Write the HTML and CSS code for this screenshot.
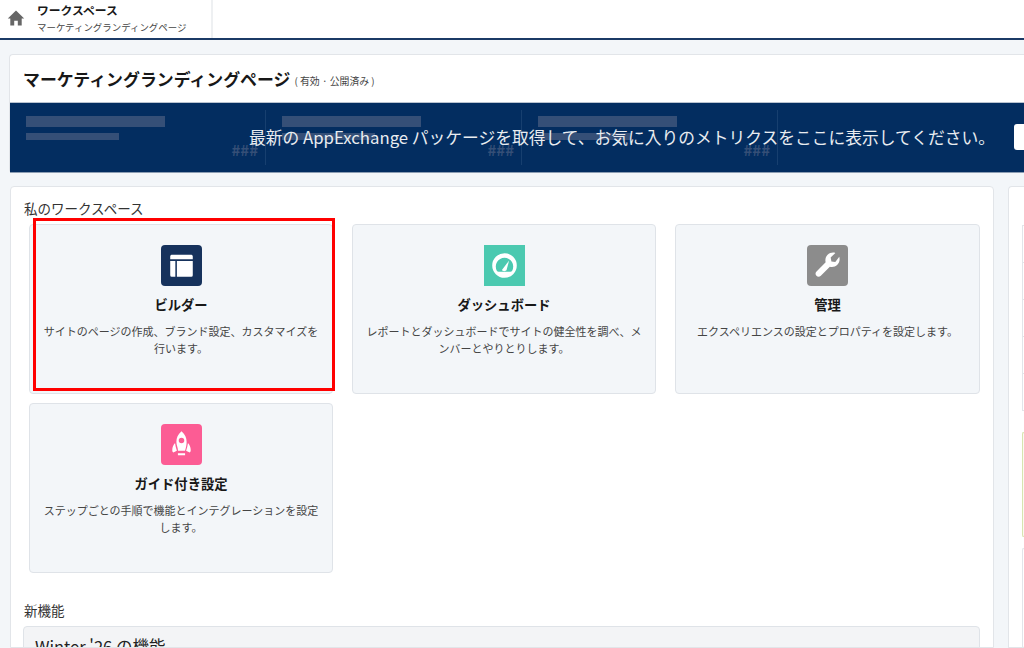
FILE: index.html
```html
<!DOCTYPE html>
<html lang="ja">
<head>
    <meta charset="UTF-8">
    <title>ワークスペース</title>
    <link rel="stylesheet" href="styles.css">
</head>
<body>
    <header class="topbar">
        <div class="tab">
            <svg class="home-icon" viewBox="0 0 18 18"><path d="M9 1.5 0.8 9.6h2.5V16.5h3.9v-4.7h3.6v4.7h3.9V9.6h2.5z"/></svg>
            <div class="tab-text">
                <div class="tab-title">ワークスペース</div>
                <div class="tab-sub">マーケティングランディングページ</div>
            </div>
        </div>
    </header>

    <section class="site-card">
        <div class="site-head">
            <h1>マーケティングランディングページ</h1>
            <span class="site-state">( 有効 · 公開済み )</span>
        </div>
        <div class="metrics">
            <div class="metric">
                <div class="bar bar-long"></div>
                <div class="bar bar-short"></div>
                <div class="hashes">###</div>
            </div>
            <div class="metric">
                <div class="bar bar-long"></div>
                <div class="bar bar-short"></div>
                <div class="hashes">###</div>
            </div>
            <div class="metric">
                <div class="bar bar-long"></div>
                <div class="bar bar-short"></div>
                <div class="hashes">###</div>
            </div>
            <div class="metrics-msg">最新の AppExchange パッケージを取得して、お気に入りのメトリクスをここに表示してください。</div>
            <div class="metrics-btn"></div>
        </div>
    </section>

    <div class="columns">
        <main class="main-card">
            <h2 class="section-label">私のワークスペース</h2>
            <div class="tiles">
                <div class="tile">
                    <div class="tile-icon icon-navy">
                        <svg viewBox="0 0 40 40"><path d="M10.5 9.5h19a1.500 1.500 0 0 1 1.500 1.500V14H9v-3a1.500 1.500 0 0 1 1.500-1.500zM9 15.500h5V31h-3.500A1.500 1.500 0 0 1 9 29.500zM15.500 15.500H31v14a1.500 1.500 0 0 1-1.500 1.500h-14z"/></svg>
                    </div>
                    <h3>ビルダー</h3>
                    <p>サイトのページの作成、ブランド設定、カスタマイズを行います。</p>
                    <div class="highlight"></div>
                </div>
                <div class="tile">
                    <div class="tile-icon icon-teal square">
                        <svg viewBox="0 0 40 40"><path fill-rule="evenodd" d="M20 8a12 12 0 1 1 0 24 12 12 0 0 1 0-24zm0 4.500a8.500 8.500 0 0 0-7.500 12.500c.4.700 1 1 1.700 1h11.600c.7 0 1.300-.3 1.700-1A8.500 8.500 0 0 0 20 12.500z"/><path d="M24.500 15 22 24.500c-.5 1.500-4 1.500-4.500 0z"/></svg>
                    </div>
                    <h3>ダッシュボード</h3>
                    <p>レポートとダッシュボードでサイトの健全性を調べ、メンバーとやりとりします。</p>
                </div>
                <div class="tile">
                    <div class="tile-icon icon-grey">
                        <svg viewBox="0 0 40 40"><path d="M31.500 11.500c.8 2.800.1 5.700-1.900 7.700-2 2-4.800 2.600-7.300 1.900L13.500 30c-1.300 1.300-3.200 1.300-4.300.1-1.200-1.200-1.200-3 .1-4.300l8.900-8.900c-.7-2.500-.1-5.300 1.900-7.300 2-2 4.900-2.700 7.600-1.900l-4.600 4.500.7 3.800 3.800.7z"/></svg>
                    </div>
                    <h3>管理</h3>
                    <p>エクスペリエンスの設定とプロパティを設定します。</p>
                </div>
                <div class="tile">
                    <div class="tile-icon icon-pink">
                        <svg viewBox="0 0 40 40"><path fill-rule="evenodd" d="M20 7c3.600 3 5 6.500 5 10.500 0 3-.7 6-1.600 8.500h-6.800C16.700 23.500 15 20.500 15 17.500 15 13.500 16.400 10 20 7zm0 6.500a2.700 2.700 0 1 0 0 5.400 2.700 2.700 0 0 0 0-5.400z"/><path d="M13.700 18.500c.3 2.700 1 5 1.800 7.500l-3.500 1.800c-.8-.6-1-1.500-1-2.500 0-2.500 1-5 2.700-6.800zM26.300 18.500c1.700 1.800 2.700 4.300 2.700 6.800 0 1-.2 1.900-1 2.500L24.500 26c.8-2.500 1.500-4.800 1.800-7.500zM16.500 28.500h7V30.500h-7z"/></svg>
                    </div>
                    <h3>ガイド付き設定</h3>
                    <p>ステップごとの手順で機能とインテグレーションを設定します。</p>
                </div>
            </div>
            <h2 class="section-label news-label">新機能</h2>
            <div class="news-box">Winter '26 の機能</div>
        </main>

        <aside class="side-card">
            <div class="side-list">
                <div></div><div></div><div></div><div></div><div></div>
            </div>
            <div class="side-green"></div>
            <div class="side-box"></div>
        </aside>
    </div>
</body>
</html>
```

FILE: styles.css
```css
* {
    box-sizing: border-box;
}
html, body {
    height: 648px;
    overflow: hidden;
}
body {
    margin: 0;
    width: 1024px;
    background: #f3f6f9;
    color: #181818;
    font-family: "Noto Sans CJK JP", "Open Sans", sans-serif;
}
.topbar {
    height: 40px;
    background: white;
    border-bottom: 2px solid #1b3a66;
}
.tab {
    width: 213px;
    height: 38px;
    display: flex;
    border-right: 2px solid #eef0f2;
}
.home-icon {
    width: 18px;
    height: 18px;
    margin: 9px 0 0 7px;
    fill: #666;
}
.tab-text {
    margin-left: 12px;
}
.tab-title {
    font-size: 11.800px;
    font-weight: 700;
    line-height: 14px;
    margin-top: 3px;
}
.tab-sub {
    font-size: 9.450px;
    line-height: 14px;
    margin-top: 3px;
    color: #444;
}

.site-card {
    margin: 14px 0 0 9px;
    height: 119px;
    background: white;
    border: 1px solid #e2e5e9;
    border-right: none;
    border-bottom: none;
    border-radius: 4px 0 0 4px;
}
.site-head {
    height: 47px;
    display: flex;
    align-items: center;
    padding-left: 13px;
}
h1 {
    margin: 0;
    font-size: 16.900px;
    font-weight: 700;
}
.site-state {
    font-size: 9.900px;
    margin-left: 4px;
    margin-top: 4px;
    color: #444;
}
.metrics {
    position: relative;
    height: 71px;
    display: flex;
    background: #032d60;
    border-top: 1px solid #b9c3d0;
    border-bottom: 1px solid #8c9db3;
    padding-top: 7px;
}
.metric {
    position: relative;
    width: 256px;
    height: 55px;
    padding: 6px 0 0 16px;
    border-right: 1px solid #173f6f;
}
.bar {
    background: #354f77;
}
.bar-long {
    width: 139px;
    height: 11px;
}
.bar-short {
    width: 93px;
    height: 7px;
    margin-top: 6px;
}
.hashes {
    position: absolute;
    right: 7px;
    top: 32px;
    font-size: 15px;
    font-weight: 700;
    line-height: 16px;
    color: #354f77;
}
.metrics-msg {
    position: absolute;
    left: 239px;
    top: 23px;
    font-size: 16.750px;
    line-height: 22px;
    color: #e9ecf0;
    white-space: nowrap;
}
.metrics-btn {
    position: absolute;
    left: 1004px;
    top: 21px;
    width: 11px;
    height: 26px;
    background: white;
    border-radius: 3px 0 0 3px;
}

.columns {
    display: grid;
    grid-template-columns: 984px 16px;
    gap: 14px;
    margin: 13px 0 0 10px;
}
.main-card, .side-card {
    height: 462px;
    overflow: hidden;
    background: white;
    border: 1px solid #e2e5e9;
    border-radius: 4px 4px 0 0;
}
.main-card {
    padding: 12px 13px 0;
}
.section-label {
    margin: 0;
    font-size: 13.500px;
    font-weight: 400;
    line-height: 18px;
    color: #333;
}
.tiles {
    display: grid;
    grid-template-columns: 304px 304px 305px;
    grid-auto-rows: 170px;
    column-gap: 19px;
    row-gap: 9px;
    margin: 7px 0 0 5px;
}
.tile {
    position: relative;
    padding: 20px 13px 0;
    background: #f3f6f9;
    border: 1px solid #dfe3e8;
    border-radius: 4px;
    text-align: center;
}
.tile-icon {
    width: 41px;
    height: 41px;
    margin: 0 auto;
    border-radius: 4px;
}
.tile-icon svg {
    display: block;
    width: 41px;
    height: 41px;
    fill: white;
}
.square {
    border-radius: 0;
}
.icon-navy { background: #16325c; }
.icon-teal { background: #4bc9b0; }
.icon-grey { background: #8c8c8c; }
.icon-pink { background: #fc5c94; }
.tile h3 {
    margin: 10px 0 0;
    font-size: 13.300px;
    font-weight: 700;
    line-height: 18px;
}
.tile p {
    margin: 9px 0 0;
    font-size: 11px;
    line-height: 17px;
    color: #444;
}
.highlight {
    position: absolute;
    left: 3px;
    top: -7px;
    width: 302px;
    height: 173px;
    border: 3px solid #ff0000;
}
.news-label {
    margin-top: 28px;
}
.news-box {
    margin: 7px 0 0 -1px;
    height: 80px;
    padding: 8px 11px;
    background: #f3f4f6;
    border: 1px solid #dfe3e8;
    border-radius: 4px;
    font-size: 16.500px;
    line-height: 22px;
    color: #222;
}

.side-card {
    padding: 38px 0 0 13px;
    border-right: none;
    border-radius: 4px 0 0 0;
}
.side-list {
    border: 1px solid #e2e5e9;
    border-right: none;
}
.side-list div {
    height: 37px;
    border-bottom: 1px solid #e2e5e9;
}
.side-list div:last-child {
    height: 36px;
    border-bottom: none;
}
.side-green {
    height: 105px;
    margin-top: 21px;
    background: #fbfbf2;
    border: 1px solid #d8e4b0;
    border-right: none;
    border-radius: 4px 0 0 4px;
}
.side-box {
    height: 100px;
    margin-top: 11px;
    border: 1px solid #e2e5e9;
    border-right: none;
    border-radius: 4px 0 0 4px;
}
```
